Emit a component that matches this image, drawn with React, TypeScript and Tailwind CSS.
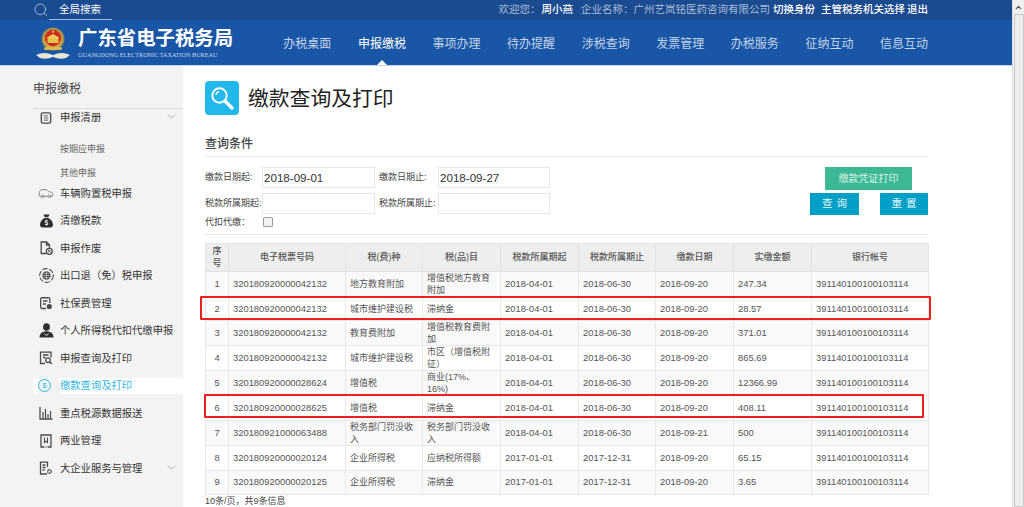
import React from "react";
import { ChevronDown, Search, Car, ChevronUp } from "lucide-react";
import { FaSackDollar } from "react-icons/fa6";

const CJK = "font-['Liberation_Sans','Noto_Sans_CJK_SC',sans-serif]";

const navItems = ["办税桌面", "申报缴税", "事项办理", "待办提醒", "涉税查询", "发票管理", "办税服务", "征纳互动", "信息互动"];

function Emblem() {
  return (
    <svg width="34" height="33" viewBox="0 0 34 33" className="shrink-0">
      <path d="M0 28 Q8 24 17 28 Q26 24 34 28 L30 31 Q24 33 17 30 Q10 33 4 31Z" fill="#e9e6d8" />
      <circle cx="17" cy="12" r="11.5" fill="#8f8a5c" />
      <circle cx="17" cy="12" r="9.8" fill="#d3a93e" />
      <circle cx="17" cy="11" r="8.2" fill="#cf2a22" />
      <rect x="11.5" y="11" width="11" height="5" fill="#e8c24a" />
      <path d="M10 11 L17 7 L24 11Z" fill="#f0cf5a" />
      <circle cx="17" cy="4.8" r="1" fill="#f5d75a" />
      <rect x="8" y="20" width="18" height="3" rx="1.5" fill="#d8b850" />
    </svg>
  );
}

function Ico({ children, w = 14, h = 14 }: { children: React.ReactNode; w?: number; h?: number }) {
  return (
    <svg width={w} height={h} viewBox="0 0 14 14" fill="none" stroke="#4a4a4a" strokeWidth="1.3">
      {children}
    </svg>
  );
}

const sideItems: { label: string; icon: React.ReactNode; chevron?: boolean; active?: boolean }[] = [
  { label: "车辆购置税申报", icon: <Car className="w-[16px] h-[16px] text-[#777]" strokeWidth={1.3} /> },
  { label: "清缴税款", icon: <FaSackDollar className="w-[13px] h-[14px] text-[#2e2e2e]" /> },
  {
    label: "申报作废",
    icon: (
      <Ico>
        <path d="M7 12.5H2.2V1H7.5L10.5 4V7" />
        <path d="M7.5 1V4H10.5" />
        <circle cx="10.3" cy="10.3" r="3" fill="#f3f3f3" />
        <path d="M9 9L11.6 11.6M11.6 9L9 11.6" strokeWidth="1" />
      </Ico>
    ),
  },
  {
    label: "出口退（免）税申报",
    icon: (
      <Ico w={15} h={15}>
        <circle cx="7" cy="7" r="6.4" strokeDasharray="5 1.5" strokeWidth="1" />
        <circle cx="7" cy="7" r="4" fill="#4a4a4a" stroke="none" />
        <path d="M3 7H11M7 3V11M4 5H10M4 9H10" stroke="#f3f3f3" strokeWidth="0.5" />
      </Ico>
    ),
  },
  {
    label: "社保费管理",
    icon: (
      <Ico>
        <path d="M7 12.5H3A1.3 1.3 0 0 1 1.7 11.2V3A1.3 1.3 0 0 1 3 1.7H9.5A1.3 1.3 0 0 1 10.8 3V7" />
        <path d="M4 5H8.5M4 8H7" />
        <path d="M4.5 1V2.8M8 1V2.8" />
        <circle cx="10.3" cy="10.5" r="2.6" fill="#4a4a4a" stroke="none" />
      </Ico>
    ),
  },
  {
    label: "个人所得税代扣代缴申报",
    icon: (
      <svg width="15" height="15" viewBox="0 0 15 15">
        <ellipse cx="7.5" cy="4" rx="3.4" ry="3.8" fill="#2e2e2e" />
        <path d="M0.5 14.5C0.5 10.5 3.5 8.3 7.5 8.3S14.5 10.5 14.5 14.5Z" fill="#2e2e2e" />
        <path d="M5.6 10.8L7.5 12.5L9.6 10.6" stroke="#f3f3f3" strokeWidth="1" fill="none" />
      </svg>
    ),
  },
  {
    label: "申报查询及打印",
    icon: (
      <Ico>
        <path d="M6 12.5H1.5V1.2H12V6.5" />
        <path d="M4 4H9.5M4 6.5H6.5" />
        <circle cx="9" cy="9.2" r="2.3" />
        <path d="M10.8 11L12.8 13" strokeWidth="1.5" />
      </Ico>
    ),
  },
  { label: "缴款查询及打印", icon: null, active: true },
  {
    label: "重点税源数据报送",
    icon: (
      <Ico>
        <path d="M1 1V13H13.5" />
        <path d="M4 12.5V6M6.5 12.5V3M9 12.5V8M11.5 12.5V5" strokeWidth="1.2" />
      </Ico>
    ),
  },
  {
    label: "两业管理",
    icon: (
      <Ico>
        <path d="M5 13H2V1H12V13H9" />
        <path d="M5.5 3.5V8.5L7 7.2L8.5 8.5V3.5" strokeWidth="1.1" />
        <path d="M5 13H9" strokeWidth="0.6" />
      </Ico>
    ),
  },
  {
    label: "大企业服务与管理",
    icon: (
      <Ico>
        <path d="M8 13H1.5V1.2H8.5V6" />
        <path d="M3.5 4H6.5M3.5 6.5H6.5M3.5 9H5.5" />
        <circle cx="10.5" cy="10.5" r="1.8" strokeWidth="1.4" strokeDasharray="1.4 0.5" />
      </Ico>
    ),
    chevron: true,
  },
];

const rows = [
  ["1", "320180920000042132", "地方教育附加", "增值税地方教育附加", "2018-04-01", "2018-06-30", "2018-09-20", "247.34"],
  ["2", "320180920000042132", "城市维护建设税", "滞纳金", "2018-04-01", "2018-06-30", "2018-09-20", "28.57"],
  ["3", "320180920000042132", "教育费附加", "增值税教育费附加", "2018-04-01", "2018-06-30", "2018-09-20", "371.01"],
  ["4", "320180920000042132", "城市维护建设税", "市区（增值税附征）", "2018-04-01", "2018-06-30", "2018-09-20", "865.69"],
  ["5", "320180920000028624", "增值税", "商业(17%、16%)", "2018-04-01", "2018-06-30", "2018-09-20", "12366.99"],
  ["6", "320180920000028625", "增值税", "滞纳金", "2018-04-01", "2018-06-30", "2018-09-20", "408.11"],
  ["7", "320180921000063488", "税务部门罚没收入", "税务部门罚没收入", "2018-04-01", "2018-06-30", "2018-09-21", "500"],
  ["8", "320180920000020124", "企业所得税", "应纳税所得额", "2017-01-01", "2017-12-31", "2018-09-20", "65.15"],
  ["9", "320180920000020125", "企业所得税", "滞纳金", "2017-01-01", "2017-12-31", "2018-09-20", "3.65"],
];

const headers = ["序号", "电子税票号码", "税(费)种", "税(品)目", "税款所属期起", "税款所属期止", "缴款日期", "实缴金额", "银行帐号"];
const widths = [23, 117, 77, 78, 78, 77, 78, 78, 117];

function Field({ label, value, labelW = "w-[57px]", inputW = "w-[113px]" }: { label: string; value?: string; labelW?: string; inputW?: string }) {
  return (
    <div className="flex items-center">
      <span className={`${labelW} text-[9px] text-[#444] whitespace-nowrap`}>{label}</span>
      <div className={`${inputW} h-[21px] border border-[#e6e6e6] bg-white flex items-center pl-[1px] text-[11.6px] text-[#333]`}>{value}</div>
    </div>
  );
}

export default function App() {
  return (
    <div className={`${CJK} w-[1024px] h-[507px] overflow-hidden flex bg-white`}>
      <div className="w-[1012px] h-full flex flex-col shrink-0">
        <div className="h-[20px] bg-[#1a4a90] flex items-center text-[10.5px] shrink-0">
          <div className="ml-[33px] w-[79px] flex items-center relative h-full">
            <Search className="w-[16px] h-[16px] text-[#b9cbe3]" strokeWidth={1.2} />
            <span className="ml-[10px] text-white">全局搜索</span>
            <div className="absolute left-[16px] right-0 bottom-0 h-px bg-[#9db8dc]" />
          </div>
          <div className="ml-auto mr-[84px] flex items-center text-[#a9bcd8] whitespace-nowrap">
            <span>欢迎您：</span>
            <span className="ml-[1px] text-white font-medium">周小燕</span>
            <span className="ml-[8px]">企业名称：广州艺岚铭医药咨询有限公司</span>
            <span className="ml-[3px] text-white font-medium">切换身份</span>
            <span className="ml-[6px] text-white font-medium">主管税务机关选择</span>
            <span className="ml-[2px] text-white font-medium">退出</span>
          </div>
        </div>

        <div className="h-[46px] bg-[#1a56a6] flex items-center shrink-0 border-b border-[#c5d3e8] pt-[2px]">
          <div className="ml-[36px] mr-[8px] flex items-center"><Emblem /></div>
          <div className="w-[160px] flex flex-col text-white leading-none">
            <span className="text-[19.4px] font-bold tracking-normal whitespace-nowrap">广东省电子税务局</span>
            <span className="text-[6.2px] mt-[3px] font-['Liberation_Serif',serif] text-[#c9d7ea] whitespace-nowrap">GUANGDONG ELECTRONIC TAXATION BUREAU</span>
          </div>
          <div className="flex ml-[32px]">
            {navItems.map((n, i) => (
              <div key={n} className={`w-[74.6px] text-center text-[12px] relative whitespace-nowrap ${i === 1 ? "text-white" : "text-[#c3d3e9]"}`}>
                {n}
                {i === 1 && <div className="absolute left-1/2 -translate-x-1/2 top-[25px] w-0 h-0 border-x-[5px] border-x-transparent border-b-[5px] border-b-white" />}
              </div>
            ))}
          </div>
        </div>

        <div className="flex flex-1 min-h-0">
          <aside className="w-[183px] h-full bg-[#f3f3f3] pl-[33px] shrink-0">
            <div className="h-[43px] flex items-center text-[12px] text-[#444] border-b border-[#dcdcdc] pt-[4px]">申报缴税</div>
            <div className="h-[16px] mt-[1px] flex items-center text-[10.3px] text-[#333] relative">
              <div className="w-[27px] flex pl-[7px]">
                <Ico w={12} h={12}>
                  <rect x="1.5" y="1" width="11" height="12" rx="2" strokeWidth="1.6" />
                  <path d="M4.3 4.5H9.7M4.3 7H9.7M4.3 9.5H9.7" strokeWidth="1" />
                </Ico>
              </div>
              <span className="whitespace-nowrap">申报清册</span>
              <ChevronDown className="absolute right-[5px] top-0 w-[13px] h-[13px] text-[#999]" strokeWidth={1.3} />
            </div>
            <div className="pl-[27px] text-[9px] text-[#666]">
              <div className="mt-[16px] h-[16px] flex items-center">按期应申报</div>
              <div className="mt-[8px] h-[16px] flex items-center">其他申报</div>
            </div>
            <div className="-mt-[2.5px]">
              {sideItems.map((s) => (
                <div key={s.label} className="h-[27.5px] flex items-center relative text-[10.3px] text-[#333]">
                  {s.active ? (
                    <div className="flex items-center w-full h-[16px] bg-white text-[#2db5e0]">
                      <div className="w-[22px] ml-[5px] flex justify-start bg-[#f3f3f3] h-full items-center shrink-0">
                        <span className="w-[13px] h-[13px] rounded-full border border-[#2db5e0] flex items-center justify-center text-[7px] leading-none">$</span>
                      </div>
                      <span className="ml-[0px] whitespace-nowrap">{s.label}</span>
                    </div>
                  ) : (
                    <>
                      <div className="w-[27px] flex justify-center pr-[1px] shrink-0">{s.icon}</div>
                      <span className="whitespace-nowrap">{s.label}</span>
                    </>
                  )}
                  {s.chevron && <ChevronDown className="absolute right-[5px] top-[6px] w-[13px] h-[13px] text-[#999]" strokeWidth={1.3} />}
                </div>
              ))}
            </div>
          </aside>

          <main className="flex-1 pl-[22px] pr-[84px] min-w-0">
            <div className="mt-[15px] flex items-center h-[34px]">
              <div className="w-[34px] h-[34px] rounded-[4px] bg-[#22b8ec] flex items-center justify-center">
                <svg width="26" height="26" viewBox="0 0 26 26" fill="none" stroke="white">
                  <circle cx="10.5" cy="10.5" r="7.2" strokeWidth="2" />
                  <path d="M7 10A3.6 3.6 0 0 1 10 6.8" strokeWidth="1.4" />
                  <path d="M16 16L23 23" strokeWidth="3.4" strokeLinecap="round" />
                </svg>
              </div>
              <h1 className="ml-[9px] mt-[2px] text-[20.8px] text-[#222] whitespace-nowrap">缴款查询及打印</h1>
            </div>

            <div className="mt-[19px] h-[23px] border-b border-[#eeeeee] text-[12px] font-medium text-[#444] leading-[20px]">查询条件</div>

            <div className="flex justify-between h-[78px] border-b border-[#e8e8e8]">
              <div className="pt-[10px]">
                <div className="flex gap-[4px]">
                  <Field label="缴款日期起:" value="2018-09-01" />
                  <Field label="缴款日期止:" value="2018-09-27" labelW="w-[59px]" inputW="w-[112px]" />
                </div>
                <div className="flex gap-[4px] mt-[5px]">
                  <Field label="税款所属期起:" />
                  <Field label="税款所属期止:" labelW="w-[59px]" inputW="w-[112px]" />
                </div>
                <div className="flex items-center mt-[2px]">
                  <span className="w-[58px] text-[9px] text-[#444]">代扣代缴：</span>
                  <span className="w-[10px] h-[10px] border border-[#999] bg-[#f2f2f2] rounded-[1px] -translate-y-[1px]" />
                </div>
              </div>
              <div className="pt-[10px] flex flex-col items-end">
                <button className="w-[87px] h-[23px] mr-[16px] bg-[#3cb895] text-[#d8f3ea] text-[10px]">缴款凭证打印</button>
                <div className="flex gap-[21px] mt-[3px]">
                  <button className="w-[49px] h-[22px] bg-[#00a0c6] text-[#e6f6fb] text-[10.5px] tracking-[4px] pl-[4px]">查询</button>
                  <button className="w-[48px] h-[22px] bg-[#00a0c6] text-[#e6f6fb] text-[10.5px] tracking-[4px] pl-[4px]">重置</button>
                </div>
              </div>
            </div>

            <div className="relative mt-[7.5px]">
              <table className="w-[723px] table-fixed border-collapse text-[9.4px] text-[#555]">
                <colgroup>
                  {widths.map((w, i) => <col key={i} style={{ width: w }} />)}
                </colgroup>
                <thead>
                  <tr className="h-[28.4px] bg-[#eeeeee]">
                    {headers.map((h, i) => (
                      <th key={h} className={`border border-[#e3e3e3] font-medium text-[9px] leading-[12px] text-[#555] text-center ${i === 0 ? "px-[5px]" : ""}`}>{h}</th>
                    ))}
                  </tr>
                </thead>
                <tbody>
                  {rows.map((r, idx) => (
                    <tr key={r[0]} className={`h-[24.6px] ${idx % 2 === 0 ? "bg-[#f9f9f9]" : "bg-white"}`}>
                      {r.map((c, i) => (
                        <td key={i} className={`border border-[#e8e8e8] leading-[12px] ${i === 0 ? "text-center" : "pl-[4px] pr-[8px]"} ${i === 2 || i === 3 ? "text-[9px]" : ""}`}>{c}</td>
                      ))}
                      <td className="border border-[#e8e8e8] pl-[4px]">391140100100103114</td>
                    </tr>
                  ))}
                </tbody>
              </table>
              <div className="text-[9px] text-[#444] leading-[12px]">10条/页，共9条信息</div>
              <div className="absolute left-[-5px] top-[53px] w-[731px] h-[24px] border-2 border-[#f01f1f] rounded-[1px]" />
              <div className="absolute left-[-1px] top-[151px] w-[720px] h-[24px] border-2 border-[#f01f1f] rounded-[1px]" />
            </div>
          </main>
        </div>
      </div>

      <div className="w-[12px] h-full bg-[#f0f0f0] flex flex-col items-center border-l border-[#dcdcdc] shrink-0">
        <ChevronUp className="w-[9px] h-[9px] mt-[3px] text-[#555]" strokeWidth={3} />
        <div className="mt-[2px] w-[10px] flex-1 bg-[#ececec] border border-[#c8c8c8] rounded-[1px]" />
      </div>
    </div>
  );
}
